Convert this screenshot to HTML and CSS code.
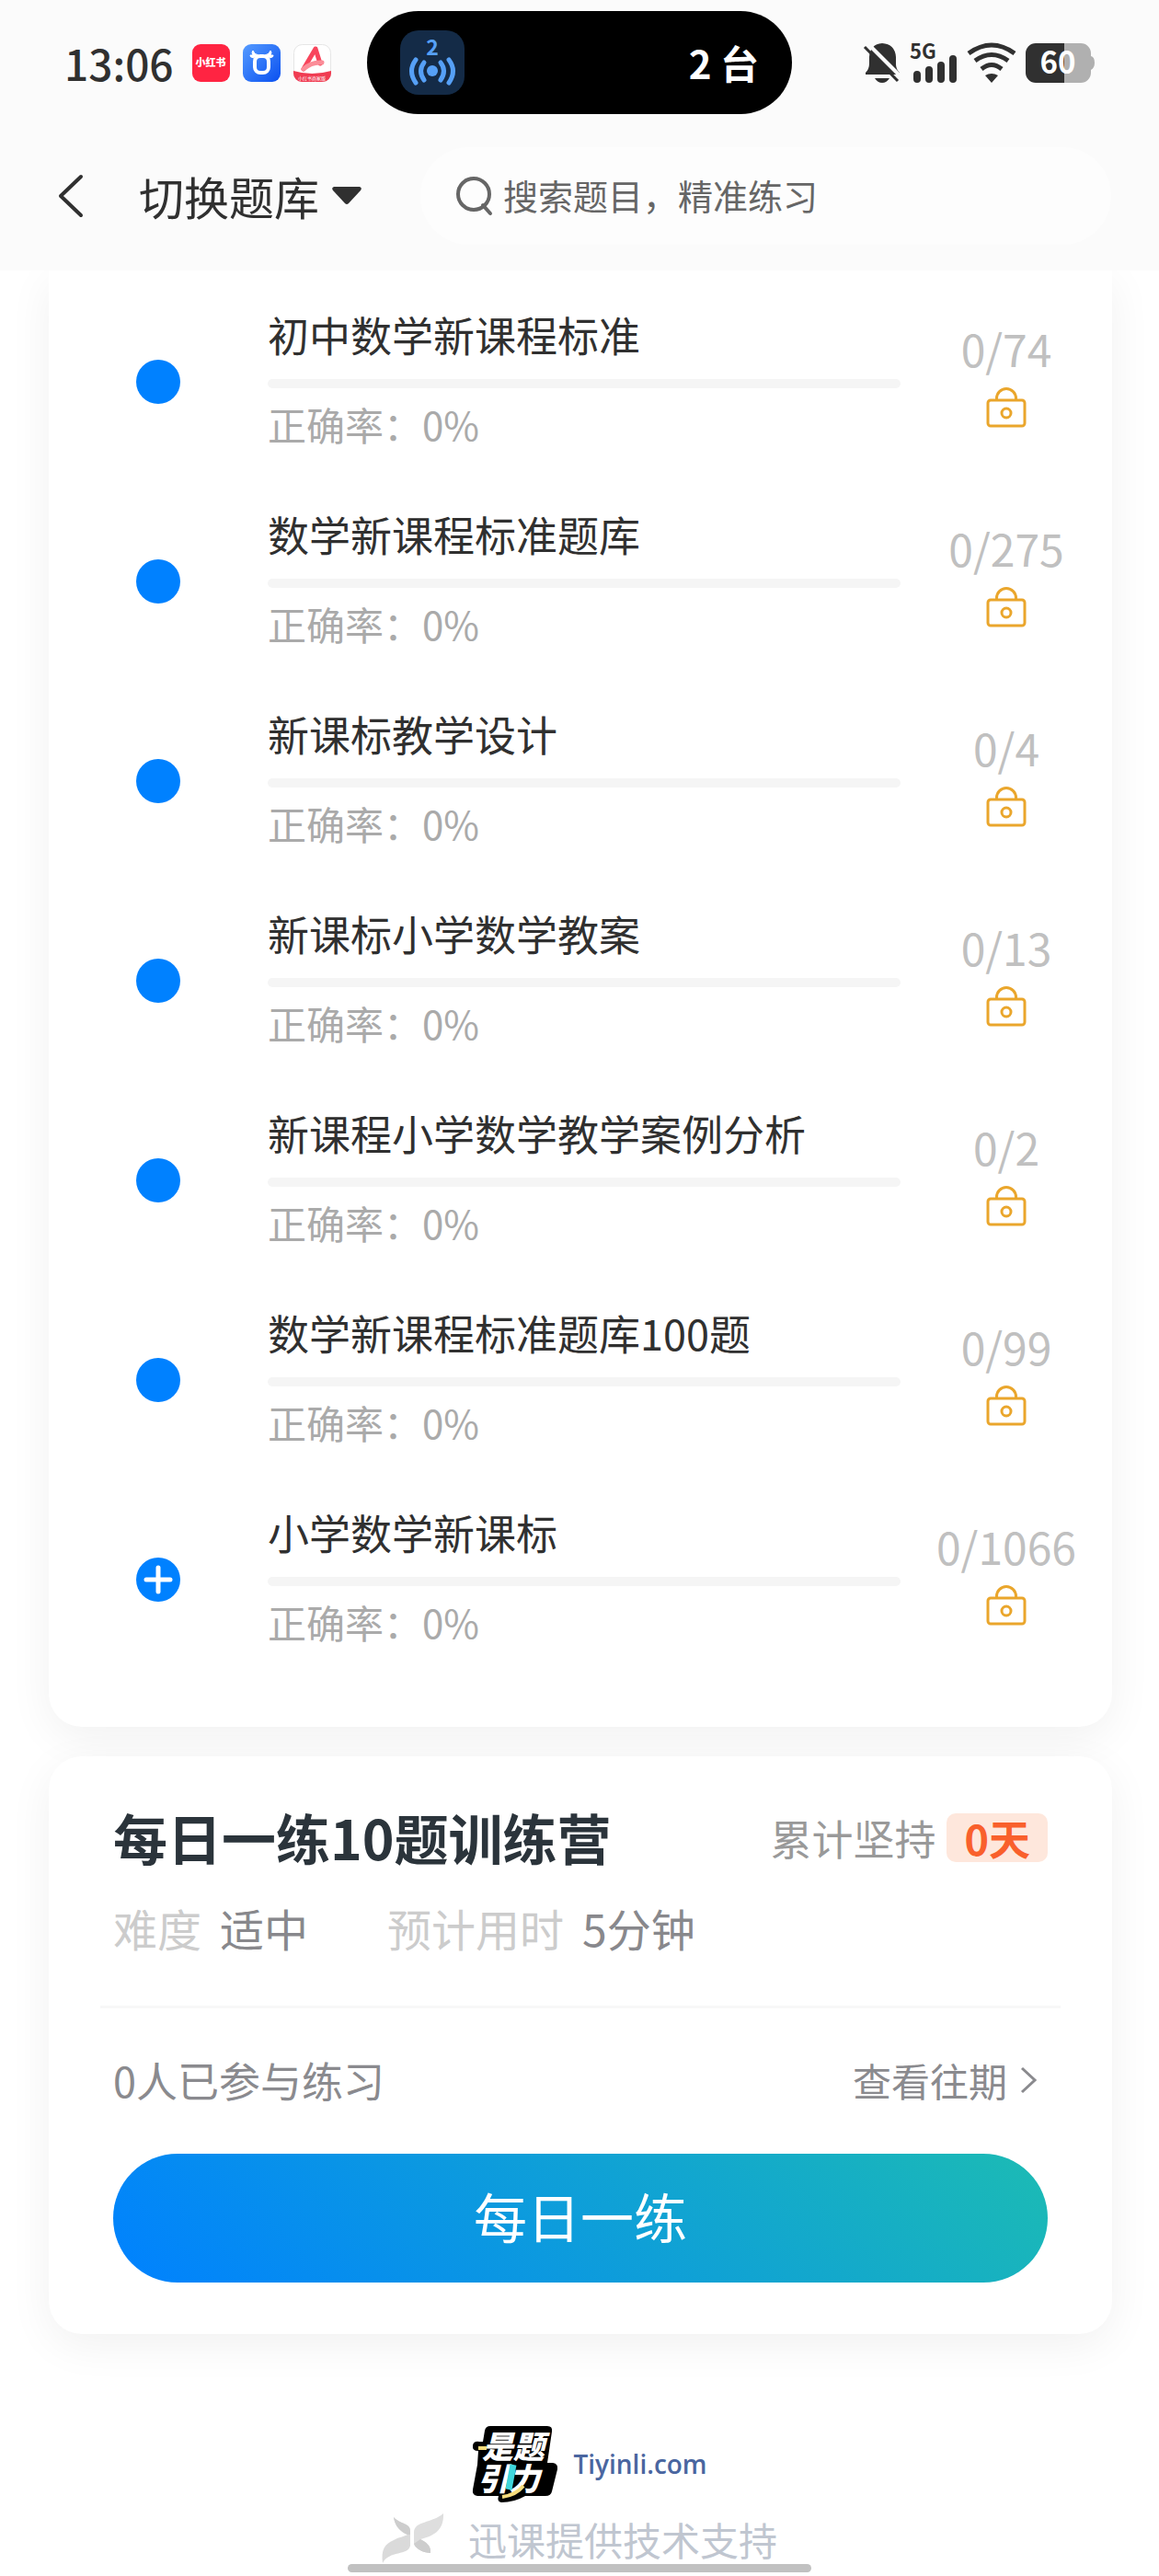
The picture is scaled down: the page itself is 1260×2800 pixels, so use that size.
FILE: index.html
```html
<!DOCTYPE html>
<html lang="zh-CN">
<head>
  <meta charset="UTF-8">
  <meta name="viewport" content="width=device-width, initial-scale=1.0">
  <title>切换题库</title>
  <link rel="stylesheet" href="styles.css">
</head>
<body>
  <!-- 公用图标 -->
  <svg class="sprite" aria-hidden="true">
    <symbol id="icon-lock" viewBox="0 0 44 46">
      <path d="M11.500 15V13a10.500 10.500 0 0 1 21 0V15M5 15H39a3 3 0 0 1 3 3V40a3 3 0 0 1-3 3H5a3 3 0 0 1-3-3V18a3 3 0 0 1 3-3Z" fill="none" stroke="#eaa62c" stroke-width="3"/>
      <circle cx="22" cy="29" r="5" fill="none" stroke="#eaa62c" stroke-width="3"/>
    </symbol>
  </svg>

  <header class="top">
    <!-- 状态栏 -->
    <div class="status-bar">
      <div class="status-left">
        <span class="clock">13:06</span>
        <svg class="app-icon" viewBox="0 0 41 41">
          <rect width="41" height="41" rx="9" fill="#ff2442"/>
          <text x="20" y="24" text-anchor="middle" font-size="11" font-weight="900" fill="#fff">小红书</text>
        </svg>
        <svg class="app-icon" viewBox="0 0 41 41">
          <defs>
            <linearGradient id="ox" x1="0" y1="0" x2="1" y2="1">
              <stop offset="0" stop-color="#559bff"/>
              <stop offset="1" stop-color="#0a50f0"/>
            </linearGradient>
          </defs>
          <rect width="41" height="41" rx="9" fill="url(#ox)"/>
          <rect x="13" y="13" width="15" height="18" rx="6" fill="none" stroke="#fff" stroke-width="4"/>
          <path d="M12 15Q7 14 8 12L11 12Q9 9 11 7Q12 11 17 12M29 15Q34 14 33 12L30 12Q32 9 30 7Q29 11 24 12" fill="#fff" stroke="#fff" stroke-width="1"/>
        </svg>
        <svg class="app-icon" viewBox="0 0 41 41">
          <rect x="0.500" y="0.500" width="40" height="40" rx="9" fill="#fff" stroke="#e6e6e6"/>
          <path d="M11 27L24 5L29 21" fill="none" stroke="#f8455c" stroke-width="5" stroke-linecap="round" stroke-linejoin="round"/>
          <path d="M11 27Q20 19 31 20" fill="none" stroke="#fb8d98" stroke-width="5" stroke-linecap="round"/>
          <path d="M0 29Q20 35 41 29V32a9 9 0 0 1-9 9H9a9 9 0 0 1-9-9Z" fill="#f03c52"/>
          <text x="20" y="39" text-anchor="middle" font-size="5" fill="#fff">小红书商家版</text>
        </svg>
      </div>

      <div class="island">
        <svg class="hotspot" viewBox="0 0 70 70">
          <rect width="70" height="70" rx="20" fill="#142b47"/>
          <text x="35" y="27" text-anchor="middle" font-size="23" font-weight="700" fill="#56a0f6">2</text>
          <circle cx="35" cy="44" r="6" fill="#56a0f6"/>
          <path d="M26 35Q19 44 26 54M44 35Q51 44 44 54M17 32Q8 44 17 57M53 32Q62 44 53 57" fill="none" stroke="#56a0f6" stroke-width="5" stroke-linecap="round"/>
        </svg>
        <span>2 台</span>
      </div>

      <div class="status-right">
        <svg width="40" height="43" viewBox="0 0 40 43">
          <path d="M20 0Q34 1 35 15V23Q35 28 39 32V34H2V32Q6 28 6 22V15Q7 1 20 0Z" fill="#303030"/>
          <path d="M12 38H28Q25 43 20 43T12 38Z" fill="#303030"/>
          <path d="M4 0L42 38" stroke="#fbfbfb" stroke-width="4"/>
          <path d="M1 4L37 41" stroke="#303030" stroke-width="3"/>
        </svg>
        <svg width="52" height="43" viewBox="0 0 52 43">
          <text x="0" y="17" font-size="22" font-weight="700" fill="#303030">5G</text>
          <path d="M8 34V39M21 29V39M34 24V39M47 17V39" stroke="#303030" stroke-width="8" stroke-linecap="round"/>
        </svg>
        <svg width="54" height="43" viewBox="0 0 54 43">
          <path d="M2 11Q27-7 52 11M9 19Q27 6 45 19M16 28Q27 19 38 28" fill="none" stroke="#303030" stroke-width="5"/>
          <path d="M20 35Q27 31 34 35L27 43Z" fill="#303030"/>
        </svg>
        <svg width="75" height="43" viewBox="0 0 75 43">
          <path d="M42 0H60a11 11 0 0 1 11 11V14Q75 15 75 21T71 29V32a11 11 0 0 1-11 11H42Z" fill="#b0b0b0"/>
          <path d="M42 0H11A11 11 0 0 0 0 11V32A11 11 0 0 0 11 43H42Z" fill="#303030"/>
          <text x="35" y="33" text-anchor="middle" font-size="33" font-weight="700" fill="#fff">60</text>
        </svg>
      </div>
    </div>

    <!-- 导航栏 -->
    <nav class="nav-bar">
      <a href="#" class="back" aria-label="返回">
        <svg width="28" height="48" viewBox="0 0 28 48"><path d="M25 3L3 24L25 45" fill="none" stroke="#303030" stroke-width="4" stroke-linecap="round" stroke-linejoin="round"/></svg>
      </a>
      <button class="switch" type="button">
        切换题库
        <svg width="32" height="20" viewBox="0 0 32 20"><path d="M2 0H30Q33 1 31 4L18 18Q16 20 14 18L1 4Q-1 1 2 0Z" fill="#303030"/></svg>
      </button>
      <label class="search">
        <svg width="42" height="44" viewBox="0 0 42 44"><circle cx="20" cy="20" r="17" fill="none" stroke="#666" stroke-width="4"/><path d="M30 32L38 41" stroke="#666" stroke-width="4" stroke-linecap="round"/></svg>
        <input type="text" placeholder="搜索题目，精准练习" aria-label="搜索题目">
      </label>
    </nav>
  </header>

  <main class="content">
    <!-- 题库列表 -->
    <ul class="card bank-list">
      <li class="bank">
        <span class="dot"></span>
        <div class="bank-info">
          <h3>初中数学新课程标准</h3>
          <div class="bar"></div>
          <p>正确率：0%</p>
        </div>
        <div class="bank-count">0/74<svg class="lock"><use href="#icon-lock"/></svg></div>
      </li>
      <li class="bank">
        <span class="dot"></span>
        <div class="bank-info">
          <h3>数学新课程标准题库</h3>
          <div class="bar"></div>
          <p>正确率：0%</p>
        </div>
        <div class="bank-count">0/275<svg class="lock"><use href="#icon-lock"/></svg></div>
      </li>
      <li class="bank">
        <span class="dot"></span>
        <div class="bank-info">
          <h3>新课标教学设计</h3>
          <div class="bar"></div>
          <p>正确率：0%</p>
        </div>
        <div class="bank-count">0/4<svg class="lock"><use href="#icon-lock"/></svg></div>
      </li>
      <li class="bank">
        <span class="dot"></span>
        <div class="bank-info">
          <h3>新课标小学数学教案</h3>
          <div class="bar"></div>
          <p>正确率：0%</p>
        </div>
        <div class="bank-count">0/13<svg class="lock"><use href="#icon-lock"/></svg></div>
      </li>
      <li class="bank">
        <span class="dot"></span>
        <div class="bank-info">
          <h3>新课程小学数学教学案例分析</h3>
          <div class="bar"></div>
          <p>正确率：0%</p>
        </div>
        <div class="bank-count">0/2<svg class="lock"><use href="#icon-lock"/></svg></div>
      </li>
      <li class="bank">
        <span class="dot"></span>
        <div class="bank-info">
          <h3>数学新课程标准题库100题</h3>
          <div class="bar"></div>
          <p>正确率：0%</p>
        </div>
        <div class="bank-count">0/99<svg class="lock"><use href="#icon-lock"/></svg></div>
      </li>
      <li class="bank">
        <button class="dot" type="button" aria-label="展开">
          <svg width="32" height="32" viewBox="0 0 32 32"><path d="M16 3V29M3 16H29" stroke="#fff" stroke-width="5" stroke-linecap="round"/></svg>
        </button>
        <div class="bank-info">
          <h3>小学数学新课标</h3>
          <div class="bar"></div>
          <p>正确率：0%</p>
        </div>
        <div class="bank-count">0/1066<svg class="lock"><use href="#icon-lock"/></svg></div>
      </li>
    </ul>

    <!-- 每日一练 -->
    <section class="card daily">
      <div class="daily-head">
        <h2>每日一练10题训练营</h2>
        <div class="keep">累计坚持<strong>0天</strong></div>
      </div>
      <dl class="daily-meta">
        <div><dt>难度</dt><dd>适中</dd></div>
        <div><dt>预计用时</dt><dd>5分钟</dd></div>
      </dl>
      <div class="daily-join">
        <span>0人已参与练习</span>
        <a href="#">查看往期
          <svg width="18" height="30" viewBox="0 0 18 30"><path d="M2 2L16 15L2 28" fill="none" stroke="#8a8a8e" stroke-width="3"/></svg>
        </a>
      </div>
      <button class="start" type="button">每日一练</button>
    </section>
  </main>

  <footer class="footer">
    <div class="brand">
      <svg width="94" height="84" viewBox="0 0 94 84">
        <path d="M20 1H82Q88 1 87 7L82 41H88Q94 42 93 48L87 72Q86 77 80 77H58Q46 84 32 84Q27 83 29 77H6Q0 76 1 70L6 43L7 28Q0 28 1 22Q2 17 8 18H12L14 6Q15 1 20 1Z" fill="#000"/>
        <g font-size="34" font-weight="900" font-style="italic" fill="#fff">
          <text x="11" y="36">是题</text>
          <text x="6" y="71">引力</text>
        </g>
        <path d="M7 25H16" stroke="#f7dc7c" stroke-width="4"/>
        <path d="M45 43L40 70" stroke="#3fd6dc" stroke-width="7"/>
        <path d="M33 78Q48 76 56 66" fill="none" stroke="#f7dc7c" stroke-width="4"/>
      </svg>
      <span>Tiyinli.com</span>
    </div>
    <div class="support">
      <svg width="70" height="56" viewBox="0 0 70 56">
        <path d="M13 4C20 12 31 10 31 19V35C29 46 8 40 1 54C-1 40 3 33 13 29C18 26 25 25 28 23C20 20 14 13 13 4Z" fill="#dadada"/>
        <path d="M67 0C54 11 36 8 35 20V33C37 39 46 43 53 43C54 35 48 31 42 28C54 25 68 20 67 0Z" fill="#dedede"/>
        <path d="M13 4C20 12 31 10 31 19V23H28C20 20 14 13 13 4ZM35 33L42 28C48 31 54 35 53 43C46 43 37 39 35 33Z" fill="#cdcdcd"/>
      </svg>
      <span>迅课提供技术支持</span>
    </div>
  </footer>
  <div class="home-bar"></div>
</body>
</html>
```
FILE: styles.css
```css
* {
  box-sizing: border-box;
  margin: 0;
  padding: 0;
}

body {
  background: #fff;
  color: #303030;
  font-family: 'Noto Sans CJK SC', 'Noto Sans', sans-serif;
  min-height: 100vh;
}

button {
  border: 0;
  font-family: inherit;
  cursor: pointer;
}

a {
  color: inherit;
  text-decoration: none;
}

svg {
  flex: none;
  overflow: visible;
}

.sprite {
  position: absolute;
  width: 0;
  height: 0;
}

.top {
  position: relative;
  z-index: 1;
  background: #fbfbfb;
  padding-bottom: 28px;
}

/* 状态栏 */
.status-bar {
  display: grid;
  grid-template-columns: 1fr 462px 1fr;
  align-items: center;
  padding: 12px 70px 0;
  height: 124px;
}

.status-left,
.status-right {
  display: flex;
  align-items: center;
}

.status-left {
  gap: 14px;
}

.status-right {
  justify-content: flex-end;
  gap: 10px;
}

.clock {
  margin-right: 6px;
  font-size: 46px;
  font-weight: 500;
  line-height: 56px;
}

.app-icon {
  width: 41px;
  height: 41px;
}

.island {
  display: flex;
  align-items: center;
  justify-content: space-between;
  height: 112px;
  padding: 0 36px;
  border-radius: 56px;
  background: #000;
  color: #fff;
  font-size: 42px;
  font-weight: 700;
  line-height: 56px;
}

.hotspot {
  width: 70px;
  height: 70px;
}

/* 导航栏 */
.nav-bar {
  display: flex;
  align-items: center;
  padding: 36px 52px 0 63px;
}

.back {
  display: flex;
  margin-right: 60px;
}

.switch {
  display: flex;
  align-items: center;
  gap: 14px;
  background: none;
  color: #303030;
  font-size: 49px;
  line-height: 56px;
}

.search {
  display: flex;
  flex: 1;
  align-items: center;
  gap: 10px;
  height: 106px;
  margin-left: 64px;
  padding: 0 38px;
  border-radius: 53px;
  background: #fdfdfd;
}

.search input {
  flex: 1;
  min-width: 0;
  padding-bottom: 4px;
  border: 0;
  outline: 0;
  background: none;
  color: #666;
  font-family: inherit;
  font-size: 38px;
}

.search input::placeholder {
  color: #666;
}

/* 卡片 */
.content {
  padding: 0 51px 0 53px;
}

.card {
  background: #fff;
  border-radius: 36px;
  box-shadow: 0 12px 48px rgba(0, 0, 0, 0.06);
}

.bank-list {
  list-style: none;
  border-radius: 0 0 36px 36px;
  padding: 12px 0 52px;
}

.bank {
  display: flex;
  align-items: center;
  height: 217px;
}

.dot {
  display: flex;
  align-items: center;
  justify-content: center;
  flex: none;
  width: 48px;
  height: 48px;
  margin: 0 95px;
  border-radius: 50%;
  background: #0081ff;
}

.bank-info {
  flex: 1;
}

.bank-info h3 {
  font-size: 45px;
  font-weight: 400;
  line-height: 52px;
}

.bar {
  height: 10px;
  margin: 22px 0 9px;
  border-radius: 5px;
  background: #f5f5f5;
}

.bank-info p {
  color: #aaa;
  font-size: 42px;
  line-height: 60px;
}

.bank-count {
  display: flex;
  flex-direction: column;
  align-items: center;
  width: 230px;
  padding-bottom: 14px;
  color: #c0c0c0;
  font-size: 48px;
  line-height: 56px;
}

.lock {
  width: 44px;
  height: 46px;
  margin-top: 14px;
}

/* 每日一练 */
.daily {
  margin-top: 32px;
  padding: 46px 70px 56px;
}

.daily-head,
.daily-join,
.keep,
.daily-join a,
.daily-meta,
.daily-meta div {
  display: flex;
  align-items: center;
}

.daily-head,
.daily-join {
  justify-content: space-between;
}

.daily-head h2 {
  color: #2b343b;
  font-size: 59px;
  line-height: 84px;
}

.keep {
  gap: 12px;
  color: #999;
  font-size: 45px;
}

.keep strong {
  padding: 0 19px;
  border-radius: 10px;
  background: #fee7dc;
  color: #f9602c;
  line-height: 53px;
}

.daily-meta {
  gap: 86px;
  margin: 24px -14px 0;
  padding: 0 14px 53px;
  border-bottom: 3px solid #f8f8f8;
  font-size: 48px;
  line-height: 64px;
}

.daily-meta div {
  gap: 20px;
}

.daily-meta dt {
  color: #ccc;
}

.daily-meta dd {
  color: #88888c;
}

.daily-join {
  padding: 46px 12px 48px 0;
  color: #8a8a8e;
  font-size: 45px;
  line-height: 64px;
}

.daily-join a {
  gap: 14px;
  font-size: 42px;
}

.start {
  display: block;
  width: 100%;
  height: 140px;
  padding-bottom: 6px;
  border-radius: 70px;
  background: linear-gradient(45deg, #0081ff, #1cbbb4);
  color: #fff;
  font-size: 58px;
}

/* 页脚 */
.footer {
  padding-top: 99px;
}

.brand,
.support {
  display: flex;
  align-items: center;
  justify-content: center;
}

.brand {
  gap: 16px;
  padding-left: 22px;
  color: #4a66a0;
  font-family: 'Open Sans', 'Noto Sans', sans-serif;
  font-size: 28px;
  font-weight: 600;
}

.brand svg text {
  font-family: 'Noto Sans CJK SC', sans-serif;
}

.support {
  gap: 24px;
  margin-top: 12px;
  color: #c0c6d0;
  font-size: 42px;
  line-height: 56px;
}

.home-bar {
  position: fixed;
  left: 50%;
  bottom: 4px;
  width: 40%;
  height: 9px;
  border-radius: 5px;
  background: #c1c1c1;
  transform: translateX(-50%);
}
```
